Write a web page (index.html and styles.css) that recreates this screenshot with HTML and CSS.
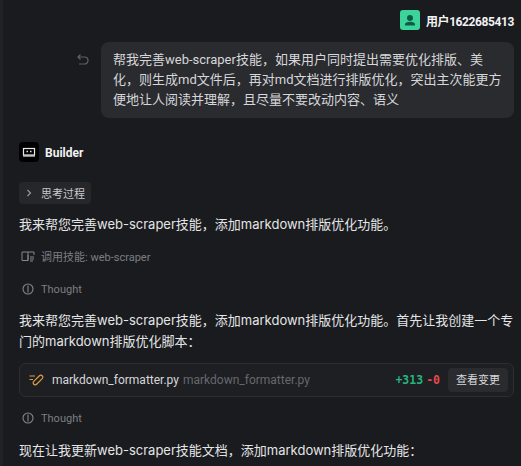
FILE: index.html
```html
<!DOCTYPE html>
<html lang="zh-CN">
<head>
  <meta charset="UTF-8">
  <title>Builder</title>
  <link rel="stylesheet" href="styles.css">
</head>
<body>
  <div class="chat">
    <div class="user-row">
      <div class="avatar">
        <svg width="20" height="20" viewBox="0 0 20 20"><circle cx="10" cy="8" r="3" fill="#0c5c45"/><path d="M5 15.500v-1c0-1.800 2-2.800 5-2.800s5 1 5 2.800v1z" fill="#0c5c45"/></svg>
      </div>
      <span class="user-name">用户1622685413</span>
    </div>

    <div class="question-row">
      <svg class="undo" width="14" height="14" viewBox="0 0 14 14" fill="none" stroke="#5f6166" stroke-width="1.200"><path d="M4.500 1.500 2 4l2.500 2.500M2 4h6.500a3.500 3.500 0 0 1 0 7H3"/></svg>
      <div class="bubble">帮我完善web-scraper技能，如果用户同时提出需要优化排版、美化，则生成md文件后，再对md文档进行排版优化，突出主次能更方便地让人阅读并理解，且尽量不要改动内容、语义</div>
    </div>

    <div class="builder">
      <div class="builder-logo">
        <svg width="20" height="20" viewBox="0 0 20 20" fill="none"><rect x="4.500" y="6.500" width="11" height="6.500" stroke="#e8e8e8" stroke-width="1.200"/><path d="M7.500 9.500h1.500M11 9.500h1.500" stroke="#e8e8e8" stroke-width="1.400"/><path d="M4 14h12" stroke="#e8e8e8" stroke-width="1.200"/></svg>
      </div>
      <span class="builder-name">Builder</span>
    </div>

    <div class="think-tag">
      <svg width="8" height="8" viewBox="0 0 8 8" fill="none" stroke="#9a9ca1" stroke-width="1.100"><path d="M2.500 1 5.500 4l-3 3"/></svg>
      <span>思考过程</span>
    </div>

    <p class="msg first">我来帮您完善web-scraper技能，添加markdown排版优化功能。</p>

    <div class="meta skill">
      <svg width="14" height="14" viewBox="0 0 14 14" fill="none" stroke="#85878c" stroke-width="1"><path d="M7 3H1v8.500h6zM7 3h6v3M7 6v5.500M9 8h4M9 10h4M9 12h3"/></svg>
      <span>调用技能: web-scraper</span>
    </div>

    <div class="meta thought">
      <svg width="14" height="14" viewBox="0 0 14 14" fill="none" stroke="#85878c" stroke-width="1.100"><circle cx="7" cy="7" r="5"/><path d="M7 3.500v7"/></svg>
      <span>Thought</span>
    </div>

    <p class="msg second">我来帮您完善web-scraper技能，添加markdown排版优化功能。首先让我创建一个专门的markdown排版优化脚本：</p>

    <div class="file-card">
      <svg class="pen" width="16" height="14" viewBox="0 0 16 14" fill="none" stroke="#dc9c45" stroke-width="1.200"><path d="M.5 3H6M.5 6.500H4"/><rect x="3" y="5" width="12" height="4" rx="2" transform="rotate(-45 9 7)"/></svg>
      <span class="file-name">markdown_formatter.py</span>
      <span class="file-path">markdown_formatter.py</span>
      <span class="added">+313</span>
      <span class="removed">-0</span>
      <span class="view-btn">查看变更</span>
    </div>

    <div class="meta thought2">
      <svg width="14" height="14" viewBox="0 0 14 14" fill="none" stroke="#85878c" stroke-width="1.100"><circle cx="7" cy="7" r="5"/><path d="M7 3.500v7"/></svg>
      <span>Thought</span>
    </div>

    <p class="msg third">现在让我更新web-scraper技能文档，添加markdown排版优化功能：</p>
  </div>
</body>
</html>
```

FILE: styles.css
```css
* {
  margin: 0;
  padding: 0;
  box-sizing: border-box;
}

html, body {
  height: 100%;
  overflow: hidden;
}

body {
  background-color: #1a1b1e;
  border-left: 3px solid #212226;
  color: #e4e5e7;
  font-family: 'Inter', 'Noto Sans CJK SC', sans-serif;
  font-size: 13px;
}

.chat {
  padding: 10px 7px 0 16px;
  display: flex;
  flex-direction: column;
}

.user-row {
  display: flex;
  justify-content: flex-end;
  align-items: center;
  gap: 6px;
  height: 20px;
}

.avatar {
  width: 20px;
  height: 20px;
  border-radius: 3px;
  background-color: #3dd49b;
}

.user-name {
  font-family: 'Roboto', 'Noto Sans CJK SC', sans-serif;
  font-size: 12px;
  font-weight: 700;
  letter-spacing: -0.4px;
  color: #f2f2f2;
}

.question-row {
  display: flex;
  justify-content: flex-end;
  align-items: flex-start;
  gap: 11px;
  margin-top: 12px;
}

.undo {
  margin-top: 11px;
}

.bubble {
  width: 413px;
  height: 76px;
  padding: 8px 12px;
  background-color: #2a2b2f;
  border-radius: 8px;
  font-family: 'Roboto', 'Noto Sans CJK SC', sans-serif;
  line-height: 20px;
  color: #d6d7da;
}

.builder {
  display: flex;
  align-items: center;
  gap: 6px;
  margin-top: 24px;
  height: 20px;
}

.builder-logo {
  width: 20px;
  height: 20px;
  border-radius: 4px;
  background-color: #000;
}

.builder-name {
  font-family: 'Roboto', 'Noto Sans CJK SC', sans-serif;
  font-size: 12px;
  font-weight: 700;
  padding-top: 1px;
  color: #f2f2f2;
}

.think-tag {
  display: flex;
  align-items: center;
  gap: 8px;
  align-self: flex-start;
  height: 22px;
  margin-top: 20px;
  padding: 0 6px;
  background-color: #26272b;
  border-radius: 4px;
  font-size: 11px;
  color: #c8c9cc;
}

.msg {
  line-height: 21px;
  color: #e4e5e7;
}

.first {
  margin-top: 10px;
}

.meta {
  display: flex;
  align-items: center;
  gap: 6px;
  font-family: 'Roboto', 'Noto Sans CJK SC', sans-serif;
  font-size: 11px;
  color: #7c7e83;
  height: 16px;
  padding-left: 2px;
}

.skill {
  margin-top: 13px;
}

.thought {
  margin-top: 17px;
}

.second {
  margin-top: 13px;
}

.file-card {
  display: flex;
  align-items: center;
  height: 34px;
  margin-top: 11px;
  padding: 0 5px 0 9px;
  background-color: #1e1f22;
  border: 1px solid #2c2d31;
  border-radius: 6px;
}

.pen {
  margin-right: 7px;
}

.file-name, .file-path {
  font-family: 'Roboto', 'Noto Sans CJK SC', sans-serif;
  font-size: 12px;
}

.file-name {
  color: #d6d7da;
}

.file-path {
  color: #66686d;
  margin-left: 4px;
  flex: 1;
}

.added, .removed {
  font-family: 'DejaVu Sans Mono', monospace;
  font-size: 11.5px;
  font-weight: 700;
}

.added {
  color: #24b47e;
}

.removed {
  color: #e5484d;
  margin-left: 3px;
}

.view-btn {
  margin-left: 8px;
  height: 24px;
  line-height: 24px;
  padding: 0 8px;
  font-size: 11px;
  background-color: #2a2b2f;
  border-radius: 4px;
  color: #d6d7da;
}

.thought2 {
  margin-top: 13px;
}

.third {
  margin-top: 14px;
}
```
